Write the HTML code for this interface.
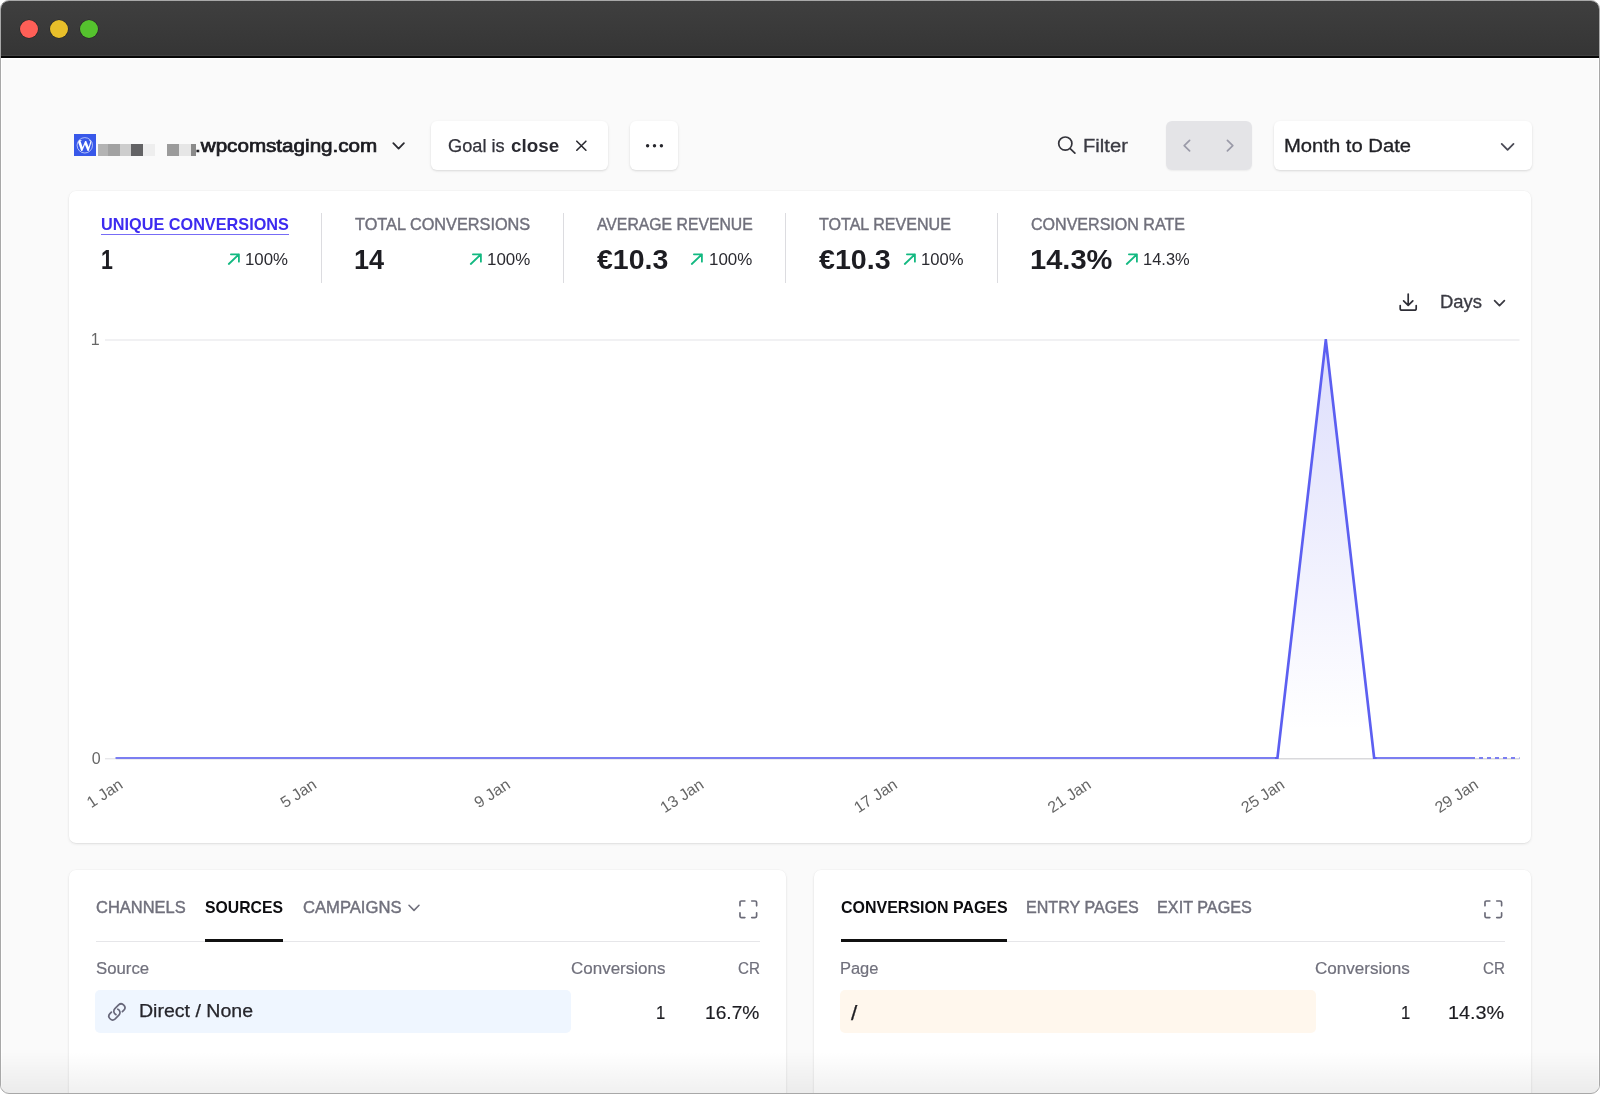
<!DOCTYPE html>
<html lang="en">
<head>
<meta charset="utf-8">
<title>Conversions dashboard</title>
<style>
html,body{margin:0;padding:0;background:#fff;}
body{width:1600px;height:1094px;overflow:hidden;position:relative;font-family:"Liberation Sans",sans-serif;}
#win{position:absolute;left:0;top:0;width:1600px;height:1094px;box-sizing:border-box;border:1px solid #a8a8a8;border-radius:9px;overflow:hidden;background:#fafafa;}
#page{position:absolute;left:-1px;top:-1px;width:1600px;height:1094px;will-change:transform;}
.abs{position:absolute;}
.t{position:absolute;transform-origin:0 0;line-height:1;white-space:nowrap;font-family:"Liberation Sans",sans-serif;}
#titlebar{position:absolute;left:0;top:0;width:1600px;height:56px;background:linear-gradient(#3f3f3f,#353535);}
.dot{position:absolute;top:20px;width:18px;height:18px;border-radius:50%;box-shadow:0 0 0 .6px rgba(0,0,0,.35);}
.card{position:absolute;background:#fff;border-radius:7px;box-shadow:0 1px 3px 0 rgba(0,0,0,.09),0 1px 2px -1px rgba(0,0,0,.09),0 0 0 .5px rgba(0,0,0,.03);}
.btn{position:absolute;background:#fff;border-radius:6px;box-shadow:0 1px 3px rgba(0,0,0,.10),0 1px 2px rgba(0,0,0,.05);}
.vdiv{position:absolute;top:213px;width:1px;height:70px;background:#dcdce0;}
svg{position:absolute;overflow:visible;}
</style>
</head>
<body>
<div id="win"><div id="page">

<!-- window chrome -->
<header id="titlebar">
  <span class="dot" style="left:20px;background:#ff5f57;"></span>
  <span class="dot" style="left:50px;background:#e8bf2a;"></span>
  <span class="dot" style="left:80px;background:#55c22e;"></span>
</header>
<div class="abs" style="left:0;top:55px;width:1600px;height:1px;background:#414141;"></div>
<div class="abs" style="left:0;top:56px;width:1600px;height:1.5px;background:#060606;"></div>
<div class="abs" style="left:0;top:57.5px;width:1600px;height:1.5px;background:#fff;"></div>
<div class="abs" style="left:1px;top:58px;width:1px;height:1036px;background:#fff;"></div>
<div class="abs" style="left:1598px;top:58px;width:1px;height:1036px;background:#fff;"></div>

<!-- toolbar -->
<nav id="toolbar">
  <div class="abs" style="left:74px;top:134px;width:22px;height:22px;background:#3858e9;"></div>
  <svg style="left:74px;top:134px;" width="22" height="22" viewBox="0 0 22 22">
    <clipPath id="wpc"><circle cx="10.8" cy="11.3" r="7.6"/></clipPath>
    <circle cx="10.8" cy="11.3" r="7.7" fill="none" stroke="#fff" stroke-opacity=".6" stroke-width="1"/>
    <text x="10.8" y="17.1" text-anchor="middle" clip-path="url(#wpc)" style="font-family:'Liberation Serif',serif;font-weight:700;font-size:16.5px;" fill="#fff">W</text>
  </svg>
  <div id="blur" aria-hidden="true">
    <i class="abs" style="left:98.2px;top:144.1px;width:9.4px;height:11.7px;background:#b3b3b3"></i>
    <i class="abs" style="left:107.5px;top:144px;width:12px;height:12px;background:#a2a2a2"></i>
    <i class="abs" style="left:119.5px;top:144px;width:12px;height:12px;background:#cdcdcd"></i>
    <i class="abs" style="left:131.3px;top:144px;width:12px;height:12px;background:#636365"></i>
    <i class="abs" style="left:143.3px;top:144px;width:12px;height:12px;background:#eeeeee"></i>
    <i class="abs" style="left:167.2px;top:144px;width:12px;height:12px;background:#9b9b9b"></i>
    <i class="abs" style="left:179.2px;top:144px;width:12px;height:12px;background:#e6e6e6"></i>
    <i class="abs" style="left:191.2px;top:144px;width:5px;height:12px;background:#8a8a8a"></i>
  </div>
  <span class="t" style="left:195.42px;top:138.29px;font-size:17.5px;color:#1b1b20;transform:scaleX(1.1786);-webkit-text-stroke:0.7px #1b1b20;">.wpcomstaging.com</span>
  <svg style="left:392px;top:140px;" width="14" height="12" viewBox="0 0 14 12"><path d="M1.3 3.2 L6.6 8.6 L11.9 3.2" fill="none" stroke="#2a2a30" stroke-width="1.8" stroke-linecap="round" stroke-linejoin="round"/></svg>

  <div class="btn" style="left:431px;top:121px;width:177px;height:48.5px;"></div>
  <span class="t" style="left:447.80px;top:138.29px;font-size:17.5px;color:#33333b;transform:scaleX(1.0399);-webkit-text-stroke:0.25px #33333b;">Goal is</span><span class="t" style="left:511.30px;top:138.29px;font-size:17.5px;color:#2a2a31;font-weight:700;transform:scaleX(1.0751);">close</span>
  <svg style="left:575px;top:140px;" width="12" height="12" viewBox="0 0 12 12"><path d="M1.8 1.2 L10.9 10.2 M10.9 1.2 L1.8 10.2" fill="none" stroke="#2a2a30" stroke-width="1.6" stroke-linecap="round"/></svg>

  <div class="btn" style="left:630px;top:121px;width:47.8px;height:48.5px;"></div>
  <svg style="left:645px;top:143px;" width="20" height="6" viewBox="0 0 20 6"><circle cx="2.6" cy="2.8" r="1.7" fill="#26262c"/><circle cx="9.5" cy="2.8" r="1.7" fill="#26262c"/><circle cx="16.4" cy="2.8" r="1.7" fill="#26262c"/></svg>

  <svg style="left:1057px;top:135px;" width="20" height="20" viewBox="0 0 20 20"><circle cx="8.3" cy="8.6" r="6.6" fill="none" stroke="#33333a" stroke-width="1.7"/><path d="M13.2 13.6 L17.9 18.2" stroke="#33333a" stroke-width="1.7" stroke-linecap="round"/></svg>
  <span class="t" style="left:1082.65px;top:138.29px;font-size:17.5px;color:#3a3a42;transform:scaleX(1.1534);-webkit-text-stroke:0.3px #3a3a42;">Filter</span>

  <div class="abs" style="left:1166px;top:121px;width:86px;height:49px;background:#e4e4e7;border-radius:6px;box-shadow:0 1px 2px rgba(0,0,0,.06);"></div>
  <svg style="left:1181px;top:138px;" width="12" height="16" viewBox="0 0 12 16"><path d="M8.6 2.3 L3.2 7.6 L8.6 12.9" fill="none" stroke="#9a9aa8" stroke-width="1.7" stroke-linecap="round" stroke-linejoin="round"/></svg>
  <svg style="left:1224px;top:138px;" width="12" height="16" viewBox="0 0 12 16"><path d="M3.4 2.3 L8.8 7.6 L3.4 12.9" fill="none" stroke="#9a9aa8" stroke-width="1.7" stroke-linecap="round" stroke-linejoin="round"/></svg>

  <div class="btn" style="left:1273.5px;top:121px;width:258px;height:48.5px;"></div>
  <span class="t" style="left:1283.84px;top:138.29px;font-size:17.5px;color:#222227;transform:scaleX(1.1554);-webkit-text-stroke:0.3px #222227;">Month to Date</span>
  <svg style="left:1500px;top:141px;" width="16" height="12" viewBox="0 0 16 12"><path d="M1.7 2.9 L7.6 8.8 L13.5 2.9" fill="none" stroke="#4a4a55" stroke-width="1.8" stroke-linecap="round" stroke-linejoin="round"/></svg>
</nav>

<!-- main chart card -->
<section class="card" style="left:69.2px;top:190.8px;width:1462px;height:652px;"></section>
<div id="stats">
  <span class="t" style="left:101.30px;top:216.71px;font-size:15.7px;color:#3d2bf0;font-weight:700;transform:scaleX(1.0363);">UNIQUE CONVERSIONS</span>
  <div class="abs" style="left:101px;top:233.8px;width:188px;height:1.2px;background:#776cf6;"></div>
  <span class="t" style="left:100.71px;top:245.98px;font-size:27.2px;color:#1d1d22;font-weight:700;transform:scaleX(0.7857);">1</span>
  <svg style="left:227.0px;top:252.5px;" width="13" height="13" viewBox="0 0 13 13"><path d="M1.8 11.0 L11.9 1.3 M3.9 1.3 H11.9 V8.7" fill="none" stroke="#13b981" stroke-width="1.8" stroke-linecap="round" stroke-linejoin="round"/></svg>
  <span class="t" style="left:245.25px;top:252.46px;font-size:16px;color:#2a2a30;transform:scaleX(1.0505);">100%</span>
  <div class="vdiv" style="left:321px;"></div>
  <span class="t" style="left:355.00px;top:216.71px;font-size:15.7px;color:#70707c;transform:scaleX(1.0377);-webkit-text-stroke:0.4px #70707c;">TOTAL CONVERSIONS</span>
  <span class="t" style="left:354.00px;top:245.98px;font-size:27.2px;color:#1d1d22;font-weight:700;transform:scaleX(0.9959);">14</span>
  <svg style="left:469.0px;top:252.5px;" width="13" height="13" viewBox="0 0 13 13"><path d="M1.8 11.0 L11.9 1.3 M3.9 1.3 H11.9 V8.7" fill="none" stroke="#13b981" stroke-width="1.8" stroke-linecap="round" stroke-linejoin="round"/></svg>
  <span class="t" style="left:487.24px;top:252.46px;font-size:16px;color:#2a2a30;transform:scaleX(1.0581);">100%</span>
  <div class="vdiv" style="left:563px;"></div>
  <span class="t" style="left:596.60px;top:216.71px;font-size:15.7px;color:#70707c;transform:scaleX(1.0057);-webkit-text-stroke:0.4px #70707c;">AVERAGE REVENUE</span>
  <span class="t" style="left:596.60px;top:245.98px;font-size:27.2px;color:#1d1d22;font-weight:700;transform:scaleX(1.0484);">€10.3</span>
  <svg style="left:690.3px;top:252.5px;" width="13" height="13" viewBox="0 0 13 13"><path d="M1.8 11.0 L11.9 1.3 M3.9 1.3 H11.9 V8.7" fill="none" stroke="#13b981" stroke-width="1.8" stroke-linecap="round" stroke-linejoin="round"/></svg>
  <span class="t" style="left:708.94px;top:252.46px;font-size:16px;color:#2a2a30;transform:scaleX(1.0581);">100%</span>
  <div class="vdiv" style="left:785px;"></div>
  <span class="t" style="left:818.50px;top:216.71px;font-size:15.7px;color:#70707c;transform:scaleX(1.0245);-webkit-text-stroke:0.4px #70707c;">TOTAL REVENUE</span>
  <span class="t" style="left:818.50px;top:245.98px;font-size:27.2px;color:#1d1d22;font-weight:700;transform:scaleX(1.0528);">€10.3</span>
  <svg style="left:903.2px;top:252.5px;" width="13" height="13" viewBox="0 0 13 13"><path d="M1.8 11.0 L11.9 1.3 M3.9 1.3 H11.9 V8.7" fill="none" stroke="#13b981" stroke-width="1.8" stroke-linecap="round" stroke-linejoin="round"/></svg>
  <span class="t" style="left:921.46px;top:252.46px;font-size:16px;color:#2a2a30;transform:scaleX(1.0379);">100%</span>
  <div class="vdiv" style="left:997px;"></div>
  <span class="t" style="left:1030.80px;top:216.71px;font-size:15.7px;color:#70707c;transform:scaleX(1.0231);-webkit-text-stroke:0.4px #70707c;">CONVERSION RATE</span>
  <span class="t" style="left:1029.73px;top:245.98px;font-size:27.2px;color:#1d1d22;font-weight:700;transform:scaleX(1.0696);">14.3%</span>
  <svg style="left:1125.0px;top:252.5px;" width="13" height="13" viewBox="0 0 13 13"><path d="M1.8 11.0 L11.9 1.3 M3.9 1.3 H11.9 V8.7" fill="none" stroke="#13b981" stroke-width="1.8" stroke-linecap="round" stroke-linejoin="round"/></svg>
  <span class="t" style="left:1143.37px;top:252.46px;font-size:16px;color:#2a2a30;transform:scaleX(1.0285);">14.3%</span>
</div>

<svg style="left:1398px;top:292px;" width="22" height="22" viewBox="0 0 22 22"><path d="M10.2 2 V13.2 M5.6 8.8 L10.2 13.4 L14.8 8.8 M2.2 13.6 V16.4 Q2.2 18.2 4 18.2 H16.4 Q18.2 18.2 18.2 16.4 V13.6" fill="none" stroke="#2e2e36" stroke-width="1.7" stroke-linecap="round" stroke-linejoin="round"/></svg>
<span class="t" style="left:1440.15px;top:293.99px;font-size:17.5px;color:#3a3a42;transform:scaleX(1.0532);-webkit-text-stroke:0.3px #3a3a42;">Days</span>
<svg style="left:1493px;top:298px;" width="14" height="12" viewBox="0 0 14 12"><path d="M1.6 2.6 L6.5 7.6 L11.4 2.6" fill="none" stroke="#3a3a42" stroke-width="1.7" stroke-linecap="round" stroke-linejoin="round"/></svg>

<svg id="chart" style="left:0;top:0;" width="1600" height="1094" viewBox="0 0 1600 1094">
  <defs>
    <linearGradient id="fillg" x1="0" y1="339" x2="0" y2="730" gradientUnits="userSpaceOnUse">
      <stop offset="0" stop-color="#6366f1" stop-opacity="0.22"/>
      <stop offset="1" stop-color="#6366f1" stop-opacity="0"/>
    </linearGradient>
  </defs>
  <clipPath id="area"><rect x="100" y="338.9" width="1430" height="420.2"/></clipPath>
  <line x1="105" y1="340" x2="1519.5" y2="340" stroke="#ececef" stroke-width="1.5"/>
  <line x1="105" y1="758.7" x2="116" y2="758.7" stroke="#e7e7ea" stroke-width="1.4"/>
  <line x1="116" y1="758.7" x2="1519.5" y2="758.7" stroke="#d9d9dc" stroke-width="1.4"/>
  <g clip-path="url(#area)">
    <path d="M115.5 758.4 H1277.4 L1325.8 340 L1374.2 758.4 H1519.5 Z" fill="url(#fillg)"/>
    <path d="M115.5 758.4 H1277.4 M1374.2 758.4 H1475" fill="none" stroke="#7b7ef1" stroke-width="2.67"/>
    <path d="M1275 758.4 H1277.4 L1325.8 340 L1374.2 758.4 H1376.6" fill="none" stroke="#5c5ff1" stroke-width="2.67" stroke-linejoin="miter" stroke-miterlimit="20"/>
    <path d="M1479 758.4 H1519.5" fill="none" stroke="#7b7ef1" stroke-width="2.67" stroke-dasharray="4 4"/>
  </g>
  <g font-family="Liberation Sans, sans-serif" font-size="16" fill="#666">
    <text x="99.6" y="345.3" text-anchor="end">1</text>
    <text x="100.6" y="764" text-anchor="end">0</text>
    <text transform="translate(124,787) rotate(-33.5)" text-anchor="end">1 Jan</text>
    <text transform="translate(317.6,787) rotate(-33.5)" text-anchor="end">5 Jan</text>
    <text transform="translate(511.3,787) rotate(-33.5)" text-anchor="end">9 Jan</text>
    <text transform="translate(704.9,787) rotate(-33.5)" text-anchor="end">13 Jan</text>
    <text transform="translate(898.5,787) rotate(-33.5)" text-anchor="end">17 Jan</text>
    <text transform="translate(1092.2,787) rotate(-33.5)" text-anchor="end">21 Jan</text>
    <text transform="translate(1285.8,787) rotate(-33.5)" text-anchor="end">25 Jan</text>
    <text transform="translate(1479.5,787) rotate(-33.5)" text-anchor="end">29 Jan</text>
  </g>
</svg>

<!-- sources card -->
<section class="card" style="left:69.2px;top:870px;width:717px;height:260px;"></section>
<div id="sources">
  <span class="t" style="left:95.80px;top:900.01px;font-size:15.7px;color:#70707c;transform:scaleX(1.0498);-webkit-text-stroke:0.4px #70707c;">CHANNELS</span><span class="t" style="left:205.00px;top:900.01px;font-size:15.7px;color:#0c0c0f;font-weight:700;transform:scaleX(1.0050);">SOURCES</span><span class="t" style="left:302.50px;top:900.01px;font-size:15.7px;color:#70707c;transform:scaleX(1.0593);-webkit-text-stroke:0.4px #70707c;">CAMPAIGNS</span>
  <svg style="left:407px;top:902px;" width="14" height="12" viewBox="0 0 14 12"><path d="M2 3.3 L7 8.4 L12 3.3" fill="none" stroke="#70707c" stroke-width="1.6" stroke-linecap="round" stroke-linejoin="round"/></svg>
  <svg style="left:739.3px;top:899.7px;" width="18.6" height="18.6" viewBox="0 0 19 19"><path d="M1 6 V2.6 Q1 1 2.6 1 H6 M13 1 H16.4 Q18 1 18 2.6 V6 M18 13 V16.4 Q18 18 16.4 18 H13 M6 18 H2.6 Q1 18 1 16.4 V13" fill="none" stroke="#6b6b78" stroke-width="1.7" stroke-linecap="round" stroke-linejoin="round"/></svg>
  <div class="abs" style="left:96px;top:940.7px;width:663.5px;height:1px;background:#e6e6e9;"></div>
  <div class="abs" style="left:205px;top:939px;width:78px;height:2.6px;background:#111;"></div>
  <span class="t" style="left:96.00px;top:960.96px;font-size:16px;color:#70707c;transform:scaleX(1.0473);-webkit-text-stroke:0.2px #70707c;">Source</span><span class="t" style="left:570.60px;top:960.96px;font-size:16px;color:#70707c;transform:scaleX(1.0615);-webkit-text-stroke:0.2px #70707c;">Conversions</span><span class="t" style="left:737.60px;top:960.96px;font-size:16px;color:#70707c;transform:scaleX(0.9488);-webkit-text-stroke:0.2px #70707c;">CR</span>
  <div class="abs" style="left:95.4px;top:989.5px;width:476px;height:43px;background:#eff6ff;border-radius:5px;"></div>
  <svg style="left:107.05px;top:1001.55px;" width="19.8" height="19.8" viewBox="0 0 24 24"><path d="M13.19 8.69a4.5 4.5 0 0 1 1.24 7.24l-4.5 4.5a4.5 4.5 0 0 1-6.36-6.36l1.76-1.76m13.34-.62 1.76-1.76a4.5 4.5 0 0 0-6.36-6.36l-4.5 4.5a4.5 4.5 0 0 0 1.24 7.24" fill="none" stroke="#67677a" stroke-width="2.05" stroke-linecap="round" stroke-linejoin="round"/></svg>
  <span class="t" style="left:138.88px;top:1003.49px;font-size:17.5px;color:#26262c;transform:scaleX(1.1167);-webkit-text-stroke:0.25px #26262c;">Direct / None</span><span class="t" style="left:656.25px;top:1005.29px;font-size:17.5px;color:#1d1d22;transform:scaleX(0.9500);-webkit-text-stroke:0.15px #1d1d22;">1</span><span class="t" style="left:705.20px;top:1005.29px;font-size:17.5px;color:#1d1d22;transform:scaleX(1.0965);-webkit-text-stroke:0.15px #1d1d22;">16.7%</span>
</div>

<!-- pages card -->
<section class="card" style="left:814px;top:870px;width:717.2px;height:260px;"></section>
<div id="pages">
  <span class="t" style="left:840.70px;top:900.01px;font-size:15.7px;color:#0c0c0f;font-weight:700;transform:scaleX(1.0189);">CONVERSION PAGES</span><span class="t" style="left:1025.57px;top:900.01px;font-size:15.7px;color:#70707c;transform:scaleX(1.0251);-webkit-text-stroke:0.4px #70707c;">ENTRY PAGES</span><span class="t" style="left:1156.77px;top:900.01px;font-size:15.7px;color:#70707c;transform:scaleX(1.0336);-webkit-text-stroke:0.4px #70707c;">EXIT PAGES</span>
  <svg style="left:1484.2px;top:899.7px;" width="18.6" height="18.6" viewBox="0 0 19 19"><path d="M1 6 V2.6 Q1 1 2.6 1 H6 M13 1 H16.4 Q18 1 18 2.6 V6 M18 13 V16.4 Q18 18 16.4 18 H13 M6 18 H2.6 Q1 18 1 16.4 V13" fill="none" stroke="#6b6b78" stroke-width="1.7" stroke-linecap="round" stroke-linejoin="round"/></svg>
  <div class="abs" style="left:841px;top:940.7px;width:663.5px;height:1px;background:#e6e6e9;"></div>
  <div class="abs" style="left:840.6px;top:939px;width:166.6px;height:2.6px;background:#111;"></div>
  <span class="t" style="left:839.97px;top:960.96px;font-size:16px;color:#70707c;transform:scaleX(1.0283);-webkit-text-stroke:0.2px #70707c;">Page</span><span class="t" style="left:1315.10px;top:960.96px;font-size:16px;color:#70707c;transform:scaleX(1.0671);-webkit-text-stroke:0.2px #70707c;">Conversions</span><span class="t" style="left:1482.60px;top:960.96px;font-size:16px;color:#70707c;transform:scaleX(0.9488);-webkit-text-stroke:0.2px #70707c;">CR</span>
  <div class="abs" style="left:840.3px;top:989.5px;width:476px;height:43px;background:#fff7ed;border-radius:5px;"></div>
  <span class="t" style="left:851.00px;top:1001.72px;font-size:21px;color:#1d1d22;transform:scaleX(1.0833);-webkit-text-stroke:0.25px #1d1d22;">/</span><span class="t" style="left:1401.25px;top:1005.29px;font-size:17.5px;color:#1d1d22;transform:scaleX(0.9500);-webkit-text-stroke:0.15px #1d1d22;">1</span><span class="t" style="left:1448.37px;top:1005.29px;font-size:17.5px;color:#1d1d22;transform:scaleX(1.1340);-webkit-text-stroke:0.15px #1d1d22;">14.3%</span>
</div>

<!-- bottom fade -->
<div class="abs" style="left:0;top:1052px;width:1600px;height:42px;background:linear-gradient(rgba(0,0,0,0),rgba(0,0,0,0.058));"></div>

</div></div>
</body>
</html>
